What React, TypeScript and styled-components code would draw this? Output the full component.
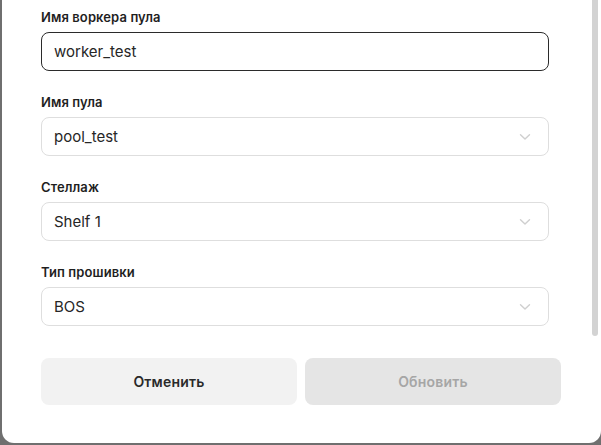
import React from "react";
import styled, { createGlobalStyle } from "styled-components";

const Global = createGlobalStyle`
  html, body { margin: 0; padding: 0; background: #6f6f6f; }
  body { font-family: Inter, "Noto Sans", sans-serif; }
  * { box-sizing: border-box; }
`;

const Modal = styled.div`
  position: relative;
  margin-left: 2px;
  width: 599px;
  height: 443px;
  background: #ffffff;
  border-radius: 0 0 12px 12px;
  overflow: hidden;
  padding: 10px 0 0 39px;
`;

const Thumb = styled.div`
  position: absolute;
  right: 3px;
  top: 0;
  width: 6px;
  height: 336px;
  background: #d3d3d3;
  border-radius: 0 0 3px 3px;
`;

const Form = styled.div`
  width: 520px;
  display: flex;
  flex-direction: column;
`;

const Field = styled.div`
  width: 508px;
  display: flex;
  flex-direction: column;
  gap: 7px;
  margin-bottom: 24px;
`;

const Label = styled.label`
  font-size: 13px;
  font-weight: 600;
  color: #1f1f1f;
  line-height: 15px;
  letter-spacing: 0.1px;
`;

const Box = styled.div<{ $focused?: boolean }>`
  height: 39px;
  border-radius: 8px;
  border: 1px solid ${(p) => (p.$focused ? "#2b2b2b" : "#dedede")};
  display: flex;
  align-items: center;
  justify-content: space-between;
  padding: 0 17px 0 12px;
  font-size: 15px;
  color: #262626;
  background: #fff;
`;

const Chevron = () => (
  <svg width="12" height="8" viewBox="0 0 12 8" fill="none">
    <path d="M1.5 1.8 L6 6 L10.5 1.8" stroke="#cfcfcf" strokeWidth="1.4" strokeLinecap="round" strokeLinejoin="round" />
  </svg>
);

const Buttons = styled.div`
  display: grid;
  grid-template-columns: 1fr 1fr;
  gap: 8px;
  margin-top: 8px;
`;

const Button = styled.button<{ $disabled?: boolean }>`
  height: 47px;
  border: none;
  border-radius: 8px;
  background: ${(p) => (p.$disabled ? "#e5e5e5" : "#f2f2f2")};
  color: ${(p) => (p.$disabled ? "#a6a6a6" : "#2a2a2a")};
  font-family: Inter, "Noto Sans", sans-serif;
  font-size: 14px;
  font-weight: 600;
  letter-spacing: 0.2px;
  cursor: pointer;
`;

const fields = [
  { label: "Имя пула", value: "pool_test" },
  { label: "Стеллаж", value: "Shelf 1" },
  { label: "Тип прошивки", value: "BOS" },
];

export default function App() {
  return (
    <>
      <Global />
      <Modal>
        <Form>
          <Field>
            <Label>Имя воркера пула</Label>
            <Box $focused>worker_test</Box>
          </Field>
          {fields.map((f) => (
            <Field key={f.label}>
              <Label>{f.label}</Label>
              <Box>
                {f.value}
                <Chevron />
              </Box>
            </Field>
          ))}
          <Buttons>
            <Button>Отменить</Button>
            <Button $disabled>Обновить</Button>
          </Buttons>
        </Form>
        <Thumb />
      </Modal>
    </>
  );
}
